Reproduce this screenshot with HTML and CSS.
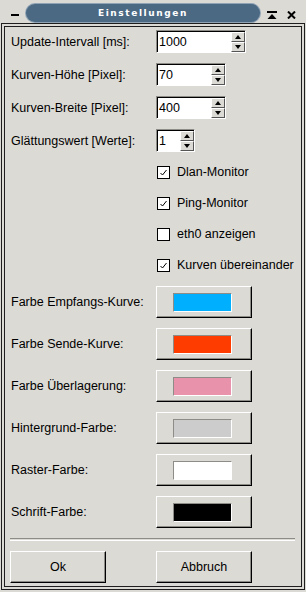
FILE: index.html
```html
<!DOCTYPE html>
<html lang="de">
<head>
    <meta charset="UTF-8">
    <title>Einstellungen</title>
    <link rel="stylesheet" href="styles.css">
</head>
<body>

    <!-- Title bar -->
    <div class="titlebar">
        <span class="tb-min"></span>
        <div class="tb-title">Einstellungen</div>
        <svg class="tb-shade" width="10" height="8" viewBox="0 0 10 8">
            <rect x="0" y="0" width="10" height="2" fill="#000"/>
            <polygon points="5,3 9.5,8 0.5,8" fill="#000"/>
        </svg>
        <svg class="tb-close" width="9" height="8" viewBox="0 0 9 8">
            <path d="M1 0.5 L8 7.5 M8 0.5 L1 7.5" stroke="#000" stroke-width="2"/>
        </svg>
    </div>

    <div class="window">
        <div class="inner">

            <!-- Number fields -->
            <div class="spin-rows">
                <div class="row">
                    <span class="label">Update-Intervall [ms]:</span>
                    <div class="spin spin-wide">
                        <span class="value">1000</span>
                        <div class="arrows"><span class="arrow up"></span><span class="arrow down"></span></div>
                    </div>
                </div>
                <div class="row">
                    <span class="label">Kurven-Höhe [Pixel]:</span>
                    <div class="spin spin-mid">
                        <span class="value">70</span>
                        <div class="arrows"><span class="arrow up"></span><span class="arrow down"></span></div>
                    </div>
                </div>
                <div class="row">
                    <span class="label">Kurven-Breite [Pixel]:</span>
                    <div class="spin spin-mid">
                        <span class="value">400</span>
                        <div class="arrows"><span class="arrow up"></span><span class="arrow down"></span></div>
                    </div>
                </div>
                <div class="row">
                    <span class="label">Glättungswert [Werte]:</span>
                    <div class="spin spin-small">
                        <span class="value">1</span>
                        <div class="arrows"><span class="arrow up"></span><span class="arrow down"></span></div>
                    </div>
                </div>
            </div>

            <!-- Check boxes -->
            <div class="check-rows">
                <div class="check">
                    <span class="box"><svg width="11" height="11" viewBox="0 0 11 11"><path d="M2.5 6 L4.5 8 L8.5 3" fill="none" stroke="#000" stroke-width="1"/></svg></span>
                    <span>Dlan-Monitor</span>
                </div>
                <div class="check">
                    <span class="box"><svg width="11" height="11" viewBox="0 0 11 11"><path d="M2.5 6 L4.5 8 L8.5 3" fill="none" stroke="#000" stroke-width="1"/></svg></span>
                    <span>Ping-Monitor</span>
                </div>
                <div class="check">
                    <span class="box"></span>
                    <span>eth0 anzeigen</span>
                </div>
                <div class="check">
                    <span class="box"><svg width="11" height="11" viewBox="0 0 11 11"><path d="M2.5 6 L4.5 8 L8.5 3" fill="none" stroke="#000" stroke-width="1"/></svg></span>
                    <span>Kurven übereinander</span>
                </div>
            </div>

            <!-- Colour pickers -->
            <div class="color-rows">
                <div class="row">
                    <span class="label">Farbe Empfangs-Kurve:</span>
                    <div class="btn color-btn"><span class="swatch swatch-rx"></span></div>
                </div>
                <div class="row">
                    <span class="label">Farbe Sende-Kurve:</span>
                    <div class="btn color-btn"><span class="swatch swatch-tx"></span></div>
                </div>
                <div class="row">
                    <span class="label">Farbe Überlagerung:</span>
                    <div class="btn color-btn"><span class="swatch swatch-overlay"></span></div>
                </div>
                <div class="row">
                    <span class="label">Hintergrund-Farbe:</span>
                    <div class="btn color-btn"><span class="swatch swatch-bg"></span></div>
                </div>
                <div class="row">
                    <span class="label">Raster-Farbe:</span>
                    <div class="btn color-btn"><span class="swatch swatch-grid"></span></div>
                </div>
                <div class="row">
                    <span class="label">Schrift-Farbe:</span>
                    <div class="btn color-btn"><span class="swatch swatch-font"></span></div>
                </div>
            </div>

            <div class="separator"></div>

            <div class="actions">
                <div class="btn action-btn">Ok</div>
                <div class="btn action-btn">Abbruch</div>
            </div>

        </div>
    </div>

</body>
</html>
```

FILE: styles.css
```css
:root {
    --bg: #dcdad5;
    --title: #4b6983;
    --frame: #1e1e1e;
    --shadow: #8e8c87;
}
html, body {
    margin: 0;
    padding: 0;
}
body {
    width: 306px;
    height: 592px;
    background-color: var(--bg);
    font-family: "Liberation Sans", Arial, sans-serif;
    font-size: 12.5px;
    color: #000;
    overflow: hidden;
}

/* Title bar */
.titlebar {
    height: 23px;
    display: flex;
    align-items: flex-start;
}
.tb-min {
    width: 8px;
    height: 2px;
    background: #000;
    margin: 14px 0 0 11px;
}
.tb-title {
    width: 234px;
    height: 18px;
    margin: 4px 0 0 7px;
    border-radius: 9px;
    background-color: var(--title);
    box-shadow: 0 0 0 1px #8fa3b5;
    color: #fff;
    font-family: "DejaVu Sans", sans-serif;
    font-weight: bold;
    font-size: 9px;
    letter-spacing: 1.6px;
    line-height: 18px;
    text-align: center;
}
.tb-shade {
    margin: 11px 0 0 7px;
}
.tb-close {
    margin: 11px 0 0 10px;
}

/* Window frame */
.window {
    margin: 0 1px;
    height: 567px;
    box-sizing: border-box;
    border: 1px solid var(--frame);
    padding: 2px;
}
.inner {
    height: 100%;
    box-sizing: border-box;
    border: 1px solid var(--frame);
    padding: 3px 5px 0 5px;
}

.row {
    display: flex;
    align-items: center;
}
.label {
    width: 146px;
    box-sizing: border-box;
    padding-left: 1px;
    white-space: nowrap;
}

/* Spin boxes */
.spin-rows {
    display: flex;
    flex-direction: column;
    gap: 10px;
}
.spin {
    height: 23px;
    box-sizing: border-box;
    display: flex;
    border: 1px solid;
    border-color: var(--shadow) #fff #fff var(--shadow);
    box-shadow: inset 1px 1px 0 #000;
    background: #fff;
    padding: 1px 0 0 1px;
}
.spin-wide { width: 90px; }
.spin-mid { width: 70px; }
.spin-small { width: 39px; }
.spin .value {
    flex: 1;
    padding-left: 1px;
    line-height: 20px;
}
.arrows {
    width: 14px;
    display: flex;
    flex-direction: column;
    background: var(--bg);
}
.arrow {
    flex: 1;
    display: flex;
    align-items: center;
    justify-content: center;
    border: 1px solid;
    border-color: #fff #555 #555 #fff;
}
.arrow::before {
    content: "";
    width: 0;
    height: 0;
    border-left: 3.5px solid transparent;
    border-right: 3.5px solid transparent;
}
.arrow.up::before {
    border-bottom: 4px solid #000;
}
.arrow.down::before {
    border-top: 4px solid #000;
}

/* Check boxes */
.check-rows {
    display: flex;
    flex-direction: column;
    gap: 7px;
    margin-top: 8px;
}
.check {
    height: 24px;
    display: flex;
    align-items: center;
    padding-left: 147px;
    white-space: nowrap;
}
.check .box {
    width: 13px;
    height: 13px;
    box-sizing: border-box;
    border: 1px solid #000;
    background: #fff;
    margin-right: 7px;
    display: flex;
}

/* Buttons */
.btn {
    width: 96px;
    height: 32px;
    box-sizing: border-box;
    border: 1px solid;
    border-color: #fff #000 #000 #fff;
    box-shadow: inset -1px -1px 0 var(--shadow);
    display: flex;
    align-items: center;
    justify-content: center;
}
.color-rows {
    display: flex;
    flex-direction: column;
    gap: 10px;
    margin-top: 9px;
}
.swatch {
    width: 59px;
    height: 19px;
    box-sizing: border-box;
    border: 1px solid;
    border-color: var(--shadow) #fff #fff var(--shadow);
    margin-right: 3px;
}
.swatch-rx { background: #00b0ff; }
.swatch-tx { background: #ff3c00; }
.swatch-overlay { background: #e892ac; }
.swatch-bg { background: #cccccc; }
.swatch-grid { background: #ffffff; }
.swatch-font { background: #000000; }

.separator {
    margin-top: 10px;
    width: 285px;
    height: 1px;
    border-top: 1px solid var(--shadow);
    border-bottom: 1px solid #fff;
}
.actions {
    display: flex;
    gap: 50px;
    margin-top: 10px;
}
```
